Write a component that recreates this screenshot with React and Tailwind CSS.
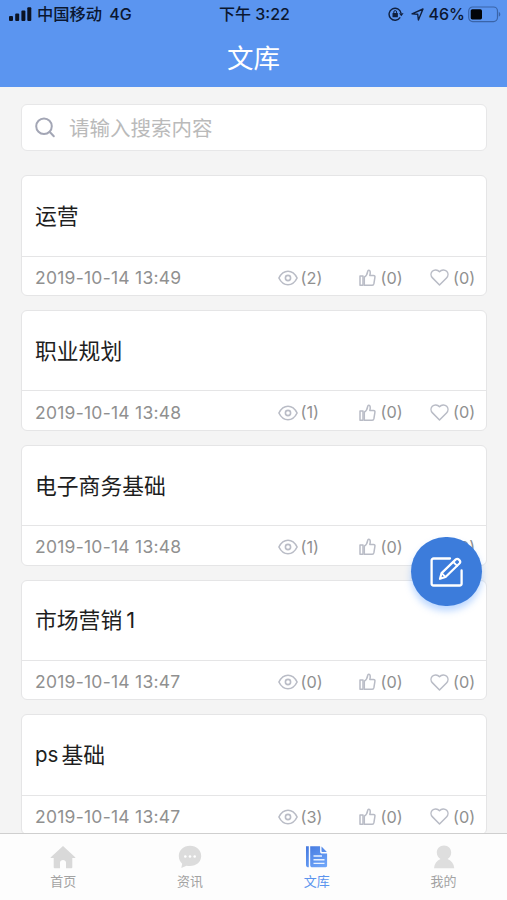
import React from "react";

const documents = [
  { title: "运营", date: "2019-10-14 13:49", views: 2, likes: 0, favorites: 0 },
  { title: "职业规划", date: "2019-10-14 13:48", views: 1, likes: 0, favorites: 0 },
  { title: "电子商务基础", date: "2019-10-14 13:48", views: 1, likes: 0, favorites: 0 },
  { title: "市场营销", suffix: "1", date: "2019-10-14 13:47", views: 0, likes: 0, favorites: 0 },
  { prefix: "ps", title: "基础", date: "2019-10-14 13:47", views: 3, likes: 0, favorites: 0 },
];

const SignalIcon = () => (
  <svg width="23" height="15" viewBox="0 0 23 15" fill="#0b1324">
    <rect x="0" y="9" width="4" height="5" rx="1" />
    <rect x="6.2" y="6.5" width="4" height="7.5" rx="1" />
    <rect x="12.4" y="3.5" width="4" height="10.5" rx="1" />
    <rect x="18.3" y="0.3" width="4" height="13.7" rx="1" />
  </svg>
);

const RotationLockIcon = () => (
  <svg width="16" height="14" viewBox="0 0 16 14" fill="none" stroke="#10203f" strokeWidth="1.4">
    <path d="M12.2 10.4A6 6 0 1 1 13 6.2" />
    <path d="M11 6.2h4.6l-2.3 3z" fill="#10203f" stroke="none" />
    <rect x="4.5" y="6" width="5.4" height="4.2" rx="0.5" fill="#10203f" stroke="none" />
    <path d="M5.8 6.5V5a1.4 1.4 0 0 1 2.8 0v1.5" strokeWidth="1" />
  </svg>
);

const LocationIcon = () => (
  <svg width="13" height="13" viewBox="0 0 13 13" fill="none" stroke="#10203f" strokeWidth="1.4" strokeLinejoin="round">
    <path d="M1 5.8 12 1 7.4 12 6.7 6.2z" />
  </svg>
);

const BatteryIcon = () => (
  <svg width="33" height="17" viewBox="0 0 33 17" fill="none">
    <rect x="0.7" y="1" width="28.8" height="14.6" rx="4" stroke="#3a64a8" strokeWidth="1.2" />
    <rect x="2.7" y="3.2" width="11.3" height="10.2" rx="1.6" fill="#020408" />
    <path d="M30.8 6c2 .6 2 4 0 4.6z" fill="#3a64a8" />
  </svg>
);

const SearchIcon = () => (
  <svg width="21" height="21" viewBox="0 0 21 21" fill="none" stroke="#a3a6b5" strokeWidth="2" strokeLinecap="round">
    <circle cx="9" cy="9.2" r="7.8" />
    <path d="m14.8 15 4 4.2" />
  </svg>
);

const EyeIcon = () => (
  <svg width="20" height="16" viewBox="0 0 20 16" fill="none" stroke="#b9bcc6" strokeWidth="1.6">
    <path d="M.9 8C3 3.8 6.2 1.2 10 1.2S17 3.8 19.1 8C17 12.2 13.8 14.8 10 14.8S3 12.2.9 8z" strokeLinejoin="round" />
    <circle cx="10" cy="8" r="2.6" />
  </svg>
);

const ThumbIcon = () => (
  <svg width="17" height="18" viewBox="0 0 17 18" fill="none" stroke="#b9bcc6" strokeWidth="1.5" strokeLinejoin="round">
    <path d="M1 7h3v9.3H1z" />
    <path d="M5.3 16.3V8.2C7.400 6.900 8.300 5 8.700 2.300c.3-1.600 2.300-1.300 2.500.5.200 1.300-.1 2.500-.4 3.700h3.700c1.200 0 1.600.7 1.400 1.800l-1 6.400c-.2 1.100-.8 1.600-1.700 1.600z" />
  </svg>
);

const HeartIcon = () => (
  <svg width="19" height="17" viewBox="0 0 19 17" fill="none" stroke="#b9bcc6" strokeWidth="1.5" strokeLinejoin="round">
    <path d="M9.5 16 2.5 8.9C.6 6.9.6 4 2.3 2.3c1.9-1.9 5.2-1.800 7.200.5 2-2.300 5.300-2.400 7.200-.5 1.700 1.700 1.700 4.600-.2 6.600z" />
  </svg>
);

const EditIcon = () => (
  <svg width="34" height="34" viewBox="0 0 34 34" fill="none" stroke="#fff" strokeWidth="2.3" strokeLinejoin="round" strokeLinecap="round">
    <path d="M21 3.500H4.600a2 2 0 0 0-2 2v23a2 2 0 0 0 2 2h26a2 2 0 0 0 2-2V15.500" />
    <path d="m11 23.800 1.600-5.700L26.800 4.400c2-1.700 5.700 1.700 3.900 3.900L16.500 22z" strokeWidth="2.2" />
    <path d="m24.300 7 3.900 3.900M12.700 18.200l3.700 3.700" strokeWidth="1.8" />
  </svg>
);

const HomeIcon = () => (
  <svg width="26" height="24" viewBox="0 0 26 24" fill="#d9d9d9">
    <path d="M13 1 .8 12.2c-.4.5-.2.8.4.8h2.500v9.300c0 .6.300.9.900.9H10v-5.600c0-3.600 6-3.600 6 0v5.600h5.400c.6 0 .9-.3.900-.9V13h2.500c.6 0 .8-.3.400-.8z" />
  </svg>
);

const ChatIcon = () => (
  <svg width="26" height="24" viewBox="0 0 26 24">
    <path d="M13 .8C6.500.8 1.800 5.200 1.800 11c0 3.700 1.500 6 3.400 7.700L4.300 23l5.200-2.300c8.600 1.600 14.700-3 14.700-9.700C24.200 5.200 19.500.8 13 .8z" fill="#dcdcdc" />
    <g fill="#fff">
      <circle cx="8.3" cy="11.5" r="1.3" />
      <circle cx="13" cy="11.5" r="1.3" />
      <circle cx="17.7" cy="11.5" r="1.3" />
    </g>
  </svg>
);

const LibraryIcon = () => (
  <svg width="26" height="24" viewBox="0 0 26 24">
    <defs>
      <linearGradient id="library" gradientUnits="userSpaceOnUse" x1="4" y1="0" x2="18" y2="24">
        <stop offset="0" stopColor="#4579df" />
        <stop offset="1" stopColor="#70a7fa" />
      </linearGradient>
    </defs>
    <g fill="url(#library)">
      <path d="M2 1.200h2.800v21c-1.800 0-2.800-.8-2.800-2.300z" />
      <path d="M6.200 1.200h9.900v5.300c0 1.400.7 2.100 2.100 2.100h4.900v12.200c0 .9-.5 1.400-1.400 1.400H8.600c-1.600 0-2.400-.8-2.400-2.300z" />
      <path d="m17.500 1.400 5.400 5.700h-4.300c-.8 0-1.100-.3-1.100-1.100z" />
    </g>
    <path d="M9.500 11h8.500M9.500 14.700h11M9.500 18.400h11" stroke="#e8f1ff" strokeWidth="1.4" />
  </svg>
);

const UserIcon = () => (
  <svg width="26" height="24" viewBox="0 0 26 24" fill="#dedede">
    <path d="M13 .5c-4.200 0-7.200 3-7.200 7 0 3 1.400 5 3.700 6.500C5.700 15.500 3.500 18.500 3 23.200h20.300c-.5-4.700-2.900-7.700-6.700-9.200C18.900 12.500 20.200 10.500 20.200 7.500c0-4-3-7-7.200-7z" />
  </svg>
);

const StatusBar = () => (
  <div className="flex h-7 items-center pr-[6px] pl-[9px] font-medium text-[#0b1730]">
    <div className="flex w-[210px] items-center">
      <SignalIcon />
      <span className="ml-[5px] text-[16.3px] leading-7">中国移动</span>
      <span className="ml-[7px] text-base">4G</span>
    </div>
    <div className="text-base whitespace-nowrap">下午 3:22</div>
    <div className="flex flex-1 items-center justify-end">
      <RotationLockIcon />
      <span className="ml-[7px]">
        <LocationIcon />
      </span>
      <span className="mr-[3px] ml-[5px] text-base">46%</span>
      <BatteryIcon />
    </div>
  </div>
);

const DocumentCard = ({ doc }) => (
  <div className="flex h-[120.75px] shrink-0 flex-col rounded-md border border-[#e5e5e6] bg-white">
    <h2 className="flex flex-1 items-center px-[13px] text-[21.8px] leading-8 text-[#1e1e1e]">
      {doc.prefix && <span className="mr-[3px] text-[20.5px]">{doc.prefix}</span>}
      {doc.title}
      {doc.suffix && <span className="ml-1">{doc.suffix}</span>}
    </h2>
    <div className="flex h-[39.5px] items-center border-t border-[#e5e5e6] pt-1 pl-[13px] text-[16.3px] text-[#909090]">
      <span className="w-[242.5px] text-[17.5px] tracking-[0.25px]">{doc.date}</span>
      <span className="flex w-[81px] items-center gap-[3px]">
        <EyeIcon />
        <span>({doc.views})</span>
      </span>
      <span className="flex w-[71.5px] items-center gap-[5px]">
        <ThumbIcon />
        <span>({doc.likes})</span>
      </span>
      <span className="flex items-center gap-[4px]">
        <HeartIcon />
        <span>({doc.favorites})</span>
      </span>
    </div>
  </div>
);

const TabItem = ({ icon, label, active }) => (
  <button className="flex flex-1 flex-col items-center pt-[11px]">
    {icon}
    <span
      className={
        active
          ? "mt-[2px] text-[13px] leading-5 text-[#5b94ee]"
          : "mt-[2px] text-[13px] leading-5 text-[#a3a3a3]"
      }
    >
      {label}
    </span>
  </button>
);

const App = () => {
  return (
    <div className="relative flex h-[900px] w-[507px] flex-col overflow-hidden bg-[#f4f4f4] font-['Inter','Noto_Sans_CJK_SC',sans-serif]">
      <header className="h-[87.4px] shrink-0 bg-[#5b95f0]">
        <StatusBar />
        <h1 className="mt-[10px] text-center text-[26.5px] leading-10 text-white">文库</h1>
      </header>

      <main className="flex min-h-0 flex-1 flex-col overflow-hidden pt-[16.5px] pr-[20px] pl-[21px]">
        <label className="flex h-[47.5px] shrink-0 items-center rounded-md border border-[#e7e7e8] bg-white pl-[13px]">
          <SearchIcon />
          <input
            className="ml-[13px] flex-1 pt-1 text-[20.5px] outline-none placeholder:text-[#bababa]"
            placeholder="请输入搜索内容"
          />
        </label>
        <div className="mt-6 flex flex-col gap-[14px]">
          {documents.map((doc) => (
            <DocumentCard key={doc.title} doc={doc} />
          ))}
        </div>
      </main>

      <nav className="flex h-[67px] shrink-0 border-t border-[#cfcfcf] bg-[#fdfdfd]">
        <TabItem icon={<HomeIcon />} label="首页" />
        <TabItem icon={<ChatIcon />} label="资讯" />
        <TabItem icon={<LibraryIcon />} label="文库" active />
        <TabItem icon={<UserIcon />} label="我的" />
      </nav>

      <button className="absolute top-[537px] left-[410.5px] flex h-[69px] w-[71.5px] items-center justify-center rounded-full bg-[#3c7cdb] shadow-[0_5px_7px_rgba(91,157,255,0.4)]">
        <EditIcon />
      </button>
    </div>
  );
};

export default App;
